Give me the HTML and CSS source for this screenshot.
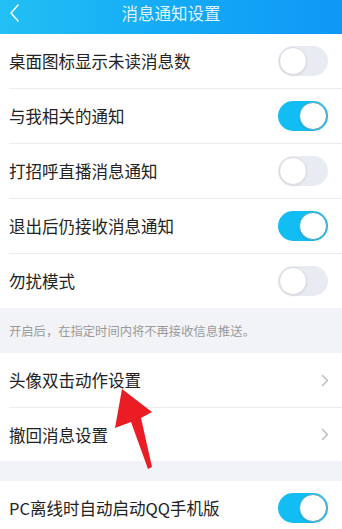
FILE: index.html
```html
<!DOCTYPE html>
<html lang="zh">
<head>
<meta charset="utf-8">
<link rel="stylesheet" href="styles.css">
</head>
<body>
<div class="page">
  <header class="header">
    <svg class="back" width="12" height="20" viewBox="0 0 12 20"><path d="M9 2 L2 10 L9 18" fill="none" stroke="#ffffff" stroke-width="1.4" stroke-linecap="round" stroke-linejoin="round"/></svg>
    <div class="title">消息通知设置</div>
  </header>
  <section class="group">
    <div class="row"><div class="inner"><span class="label">桌面图标显示未读消息数</span><span class="toggle"></span></div></div>
    <div class="row"><div class="inner"><span class="label">与我相关的通知</span><span class="toggle on"></span></div></div>
    <div class="row"><div class="inner"><span class="label">打招呼直播消息通知</span><span class="toggle"></span></div></div>
    <div class="row"><div class="inner"><span class="label">退出后仍接收消息通知</span><span class="toggle on"></span></div></div>
    <div class="row last"><div class="inner"><span class="label">勿扰模式</span><span class="toggle"></span></div></div>
  </section>
  <div class="note">开启后，在指定时间内将不再接收信息推送。</div>
  <section class="group">
    <div class="row"><div class="inner"><span class="label">头像双击动作设置</span><span class="chev"><svg width="8" height="13" viewBox="0 0 8 13"><path d="M1.5 1.5 L6.5 6.5 L1.5 11.5" fill="none" stroke="#bdbdbd" stroke-width="1.5" stroke-linecap="round" stroke-linejoin="round"/></svg></span></div></div>
    <div class="row last short"><div class="inner"><span class="label">撤回消息设置</span><span class="chev"><svg width="8" height="13" viewBox="0 0 8 13"><path d="M1.5 1.5 L6.5 6.5 L1.5 11.5" fill="none" stroke="#bdbdbd" stroke-width="1.5" stroke-linecap="round" stroke-linejoin="round"/></svg></span></div></div>
  </section>
  <div class="gap"></div>
  <section class="group">
    <div class="row last"><div class="inner"><span class="label">PC离线时自动启动QQ手机版</span><span class="toggle on"></span></div></div>
  </section>
  <svg class="arrow" width="342" height="529" viewBox="0 0 342 529"><polygon points="122,389 152,412 141,418 152,467 148,469 131,422 115,428" fill="#ea1d25"/></svg>
</div>
</body>
</html>
```
FILE: styles.css
```css
html, body { margin: 0; padding: 0; }
body {
  font-family: "Noto Sans CJK SC", "Noto Sans", sans-serif;
  background: #ffffff;
  width: 342px;
  height: 529px;
  overflow: hidden;
}
.page { position: relative; width: 342px; height: 529px; overflow: hidden; }
.header {
  height: 34px;
  background: linear-gradient(90deg, #22c0f4 0%, #14aaf6 50%, #0f98f6 100%);
  display: flex;
  align-items: flex-start;
  justify-content: center;
  position: relative;
  box-sizing: border-box;
  padding-top: 1px;
}
.back { position: absolute; left: 9px; top: 3px; }
.title {
  color: rgba(255,255,255,0.88);
  font-size: 16.5px;
  line-height: 24px;
}
.group { background: #ffffff; }
.row { padding-left: 9px; height: 55px; box-sizing: border-box; }
.row .inner {
  height: 100%;
  box-sizing: border-box;
  border-bottom: 1px solid #ededf0;
  display: flex;
  align-items: center;
  justify-content: space-between;
  padding-right: 14px;
}
.row.last { height: 54px; }
.row.short { height: 53px; }
.row.last .inner { border-bottom: none; }
.label { font-size: 16.5px; color: #222222; }
.toggle {
  width: 50px;
  height: 30px;
  border-radius: 15px;
  background: #e9ebf2;
  position: relative;
  box-sizing: border-box;
}
.toggle::after {
  content: "";
  position: absolute;
  top: 1px;
  left: 1px;
  width: 28px;
  height: 28px;
  border-radius: 50%;
  background: #ffffff;
  box-sizing: border-box;
  border: 1px solid #d9dbe2;
  box-shadow: 0 1px 2px rgba(0,0,0,0.08);
}
.toggle.on { background: #12bdf3; }
.toggle.on::after { left: 21px; border-color: #5aa7c0; }
.chev { display: flex; align-items: center; margin-right: -1px; }
.note {
  background: #f2f3f7;
  height: 45px;
  box-sizing: border-box;
  padding-left: 9px;
  display: flex;
  align-items: center;
  font-size: 12.3px;
  color: #9a9a9a;
}
.gap { height: 20px; background: #f2f3f7; }
.arrow { position: absolute; left: 0; top: 0; pointer-events: none; }
```
